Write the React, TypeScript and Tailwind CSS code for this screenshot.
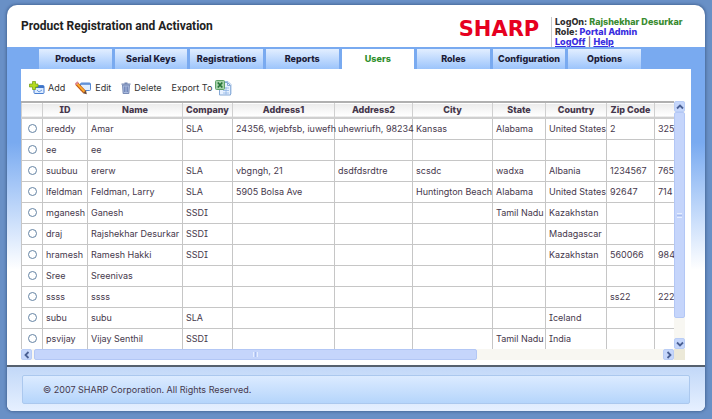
import { ReactNode } from "react";

const tabs = ["Products", "Serial Keys", "Registrations", "Reports", "Users", "Roles", "Configuration", "Options"];

const columns = ["", "ID", "Name", "Company", "Address1", "Address2", "City", "State", "Country", "Zip Code", ""];

const rows: string[][] = [
  ["areddy", "Amar", "SLA", "24356, wjebfsb, iuwefh", "uhewriufh, 98234", "Kansas", "Alabama", "United States", "2", "325"],
  ["ee", "ee", "", "", "", "", "", "", "", ""],
  ["suubuu", "ererw", "SLA", "vbgngh, 21", "dsdfdsrdtre", "scsdc", "wadxa", "Albania", "1234567", "765"],
  ["lfeldman", "Feldman, Larry", "SLA", "5905 Bolsa Ave", "", "Huntington Beach", "Alabama", "United States", "92647", "714"],
  ["mganesh", "Ganesh", "SSDI", "", "", "", "Tamil Nadu", "Kazakhstan", "", ""],
  ["draj", "Rajshekhar Desurkar", "SSDI", "", "", "", "", "Madagascar", "", ""],
  ["hramesh", "Ramesh Hakki", "SSDI", "", "", "", "", "Kazakhstan", "560066", "984"],
  ["Sree", "Sreenivas", "", "", "", "", "", "", "", ""],
  ["ssss", "ssss", "", "", "", "", "", "", "ss22", "222"],
  ["subu", "subu", "SLA", "", "", "", "", "Iceland", "", ""],
  ["psvijay", "Vijay Senthil", "SSDI", "", "", "", "Tamil Nadu", "India", "", ""],
];

function AddIcon() {
  return (
    <svg width="16" height="14" viewBox="0 0 16 14" aria-hidden="true">
      <rect x="5" y="4.5" width="10" height="8" rx="1" fill="#dcebff" stroke="#4a7fd0" />
      <path d="M5 6h10" stroke="#3f74c8" strokeWidth="2" />
      <path d="M8 9l2 2 3-2" fill="none" stroke="#6d9ce0" />
      <path d="M3.500 0.500h3v2.500h2.500v3h-2.500v2.500h-3v-2.500h-3v-3h3z" fill="#b4da20" stroke="#6d9a14" strokeWidth=".7" />
    </svg>
  );
}

function EditIcon() {
  return (
    <svg width="17" height="14" viewBox="0 0 17 14" aria-hidden="true">
      <rect x="5.500" y="2" width="10" height="7.500" rx="1" fill="#dfeeff" stroke="#5589d4" />
      <path d="M6 3h9" stroke="#4f83d0" strokeWidth="1.500" />
      <path d="M1.500 2.500L9.500 11" stroke="#c55a17" strokeWidth="3.600" />
      <path d="M1.800 2.500L9.500 10.700" stroke="#ffb22d" strokeWidth="1.800" />
      <path d="M8 12.200l3-2.700 .8 3.700z" fill="#6b4630" />
      <path d="M.4 3.500L3 1" stroke="#df8797" strokeWidth="2" />
    </svg>
  );
}

function TrashIcon() {
  return (
    <svg width="10" height="12" viewBox="0 0 10 12" aria-hidden="true">
      <path d="M1.500 3h7l-.6 8.500H2.100z" fill="#a9bbde" stroke="#6478a8" strokeWidth=".8" />
      <path d="M.5 2.200h9M3.500 1h3" stroke="#7488b4" strokeWidth="1.200" />
      <path d="M3.500 4.500v5.500M5 4.500v5.500M6.500 4.500v5.500" stroke="#6076ad" strokeWidth=".7" />
    </svg>
  );
}

function ExcelIcon() {
  return (
    <svg width="17" height="16" viewBox="0 0 17 16" aria-hidden="true">
      <path d="M4.500 2.500h8l3 3v9.500h-11z" fill="#e7f1ff" stroke="#86a9d6" />
      <path d="M7 1.500h6l3 3v9.500" fill="none" stroke="#a6c2e6" />
      <path d="M12.500 2.500v3h3" fill="none" stroke="#86a9d6" />
      <path d="M10 8h4M8 10.500h6M8 13h6M11 7v7.500" stroke="#8fb5e4" strokeWidth=".8" />
      <rect x=".5" y=".5" width="9" height="9" rx="1" fill="#a5d0a8" stroke="#5fa268" />
      <path d="M2.800 2.500l4.500 5M7.300 2.500l-4.500 5" stroke="#267238" strokeWidth="1.700" />
    </svg>
  );
}

function Chevron({ d }: { d: string }) {
  return (
    <svg width="8" height="8" viewBox="0 0 8 8" aria-hidden="true">
      <path d={d} fill="none" stroke="#4a6094" strokeWidth="1.800" />
    </svg>
  );
}

function ScrollButton({ label, d }: { label: string; d: string }) {
  return (
    <button
      type="button"
      aria-label={label}
      className="flex h-[11px] w-[11px] shrink-0 items-center justify-center rounded-xs border border-[#b9cdf6] bg-[#c5d6fb]"
    >
      <Chevron d={d} />
    </button>
  );
}

function ToolButton({ children }: { children: ReactNode }) {
  return (
    <button type="button" className="flex items-center gap-[3px] whitespace-nowrap">
      {children}
    </button>
  );
}

export default function App() {
  return (
    <div className="min-h-screen bg-[#6990c6] px-[7px] pt-[5px] pb-2 font-['Inter','DejaVu_Sans',Verdana,sans-serif] text-[9px] leading-[10px] text-[#46384c] [font-feature-settings:'cv08']">
      <div className="overflow-hidden rounded-t-[10px] rounded-b-md bg-white shadow-[0_0_3px_1px_#48699a]">
        <header className="flex h-[42px] items-start justify-between px-[14px]">
          <h1 className="pt-3 font-['Roboto','Liberation_Sans',sans-serif] text-[12px] leading-[18px] font-bold whitespace-nowrap text-[#222]">
            Product Registration and Activation
          </h1>
          <div className="flex items-start gap-2 pt-3">
            <div className="w-[88px] pt-[2px] text-center font-['DejaVu_Sans',Verdana,sans-serif] text-[21px] leading-[20px] font-bold text-[#e60020]">
              SHARP
            </div>
            <div className="w-[140px] border-l border-[#c9c9c9] pl-[3px] font-extrabold whitespace-nowrap text-[#303030]">
              <p>
                LogOn: <span className="text-[#3b8c32]">Rajshekhar Desurkar</span>
              </p>
              <p>
                Role: <span className="text-[#3a2fe0]">Portal Admin</span>
              </p>
              <p className="font-normal">
                <a href="#logoff" className="font-extrabold text-[#3a2fe0] underline">LogOff</a>
                {" | "}
                <a href="#help" className="font-extrabold text-[#3a2fe0] underline">Help</a>
              </p>
            </div>
          </div>
        </header>

        <div className="bg-linear-to-b from-[#79aaf0] from-30% to-white to-70% px-[14px] pt-[2px]">
          <nav className="mr-[50px] ml-[18px] grid grid-cols-8 gap-[3px]">
            {tabs.map((tab) => (
              <a
                key={tab}
                href={"#" + tab}
                className={
                  tab === "Users"
                    ? "flex h-5 items-center justify-center bg-white font-extrabold text-[#2f8f2c]"
                    : "flex h-5 items-center justify-center bg-linear-to-b from-[#e2eeff] to-[#9cc4fb] font-extrabold whitespace-nowrap text-[#1c1c38]"
                }
              >
                {tab}
              </a>
            ))}
          </nav>

          <main className="bg-white pr-[6px] pb-[5px]">
            <div className="flex h-8 items-center gap-[10px] pt-[6px] pl-2 text-[#333]">
              <ToolButton><AddIcon />Add</ToolButton>
              <ToolButton><EditIcon />Edit</ToolButton>
              <ToolButton><TrashIcon />Delete</ToolButton>
              <ToolButton>Export To<ExcelIcon /></ToolButton>
            </div>

            <div className="flex">
              <div className="h-[248px] min-w-0 flex-1 overflow-hidden">
                <table className="w-[700px] table-fixed border-collapse">
                  <colgroup>
                    <col className="w-[21px]" />
                    <col className="w-[45px]" />
                    <col className="w-[95px]" />
                    <col className="w-[50px]" />
                    <col className="w-[102px]" />
                    <col className="w-[78px]" />
                    <col className="w-[80px]" />
                    <col className="w-[53px]" />
                    <col className="w-[61px]" />
                    <col className="w-[48px]" />
                    <col />
                  </colgroup>
                  <thead>
                    <tr className="h-4 border-t-2 border-b-2 border-t-[#b0b0b0] border-b-[#cfcfcf] bg-linear-to-b from-[#ececec] to-white">
                      {columns.map((c, i) => (
                        <th key={i} className="overflow-hidden border-x border-[#d0d0d0] p-0 font-extrabold whitespace-nowrap">
                          {c}
                        </th>
                      ))}
                    </tr>
                  </thead>
                  <tbody>
                    {rows.map((row) => (
                      <tr key={row[0]} className="h-[21px]">
                        <td className="border border-[#c6c6c6] p-0">
                          <input
                            type="radio"
                            name="user"
                            aria-label={"Select " + row[0]}
                            className="mx-auto block h-[9px] w-[9px] appearance-none rounded-full border border-[#6584a4] bg-white"
                          />
                        </td>
                        {row.map((cell, i) => (
                          <td key={i} className="border border-[#c6c6c6] p-0 pl-[3px] whitespace-nowrap">
                            {cell}
                          </td>
                        ))}
                      </tr>
                    ))}
                  </tbody>
                </table>
              </div>
              <div className="flex w-[11px] flex-col bg-[#f8f7f2]">
                <ScrollButton label="Scroll up" d="M1 5.500L4 2.500L7 5.500" />
                <div className="flex h-[206px] flex-col items-center justify-center gap-px rounded-xs border border-[#b3c7f5] bg-[#c5d5fb]">
                  <span className="h-px w-[5px] bg-[#e6eeff]" />
                  <span className="h-px w-[5px] bg-[#a9bdef]" />
                  <span className="h-px w-[5px] bg-[#e6eeff]" />
                </div>
                <div className="flex-1" />
                <ScrollButton label="Scroll down" d="M1 2.500L4 5.500L7 2.500" />
              </div>
            </div>

            <div className="flex h-[11px] bg-[#f8f7f2]">
              <ScrollButton label="Scroll left" d="M5.500 1L2.500 4L5.500 7" />
              <div className="ml-[2px] flex w-2/3 items-center justify-center gap-px rounded-xs border border-[#b3c7f5] bg-[#c5d5fb]">
                <span className="h-[5px] w-px bg-[#e6eeff]" />
                <span className="h-[5px] w-px bg-[#a9bdef]" />
                <span className="h-[5px] w-px bg-[#e6eeff]" />
              </div>
              <div className="flex-1" />
              <ScrollButton label="Scroll right" d="M2.500 1L5.500 4L2.500 7" />
              <div className="w-[11px] bg-[#ece9d8]" />
            </div>
          </main>
        </div>

        <footer className="border-t-2 border-[#55606e] bg-linear-to-b from-[#c2d8f8] to-[#e6f0ff] px-[15px] pt-2 pb-[7px]">
          <p className="flex h-[29px] items-center rounded-xs border border-[#abc8ee] bg-linear-to-b from-[#dcebff] to-[#b5d5fb] pl-5">
            © 2007 SHARP Corporation. All Rights Reserved.
          </p>
        </footer>
      </div>
    </div>
  );
}
